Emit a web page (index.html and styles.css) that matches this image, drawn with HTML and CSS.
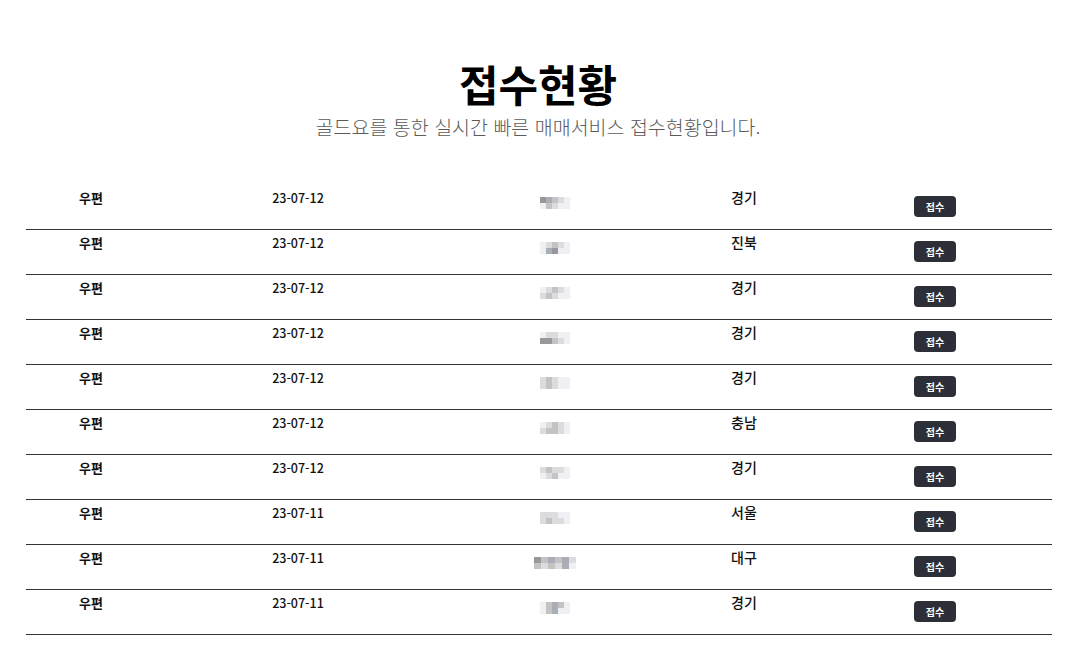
FILE: index.html
```html
<!DOCTYPE html>
<html lang="ko">
<head>
<meta charset="utf-8">
<title>접수현황</title>
<link rel="stylesheet" href="styles.css">
</head>
<body>
<header class="head">
  <h1 class="title">접수현황</h1>
  <p class="sub">골드요를 통한 실시간 빠른 매매서비스 접수현황입니다.</p>
</header>
<div class="list">
  <div class="row"><span class="c1">우편</span><span class="c2">23-07-12</span><span class="c3"><i class="mz"><b class="a"></b><b class="b"></b><b class="c"></b><b class="d"></b><b class="e"></b><b class="e"></b><b class="c"></b><b class="d"></b><b class="e"></b><b class="e"></b></i></span><span class="c4">경기</span><span class="c5"><em class="btn">접수</em></span></div>
  <div class="row"><span class="c1">우편</span><span class="c2">23-07-12</span><span class="c3"><i class="mz"><b class="e"></b><b class="d"></b><b class="c"></b><b class="d"></b><b class="e"></b><b class="e"></b><b class="b"></b><b class="a"></b><b class="e"></b><b class="e"></b></i></span><span class="c4">진북</span><span class="c5"><em class="btn">접수</em></span></div>
  <div class="row"><span class="c1">우편</span><span class="c2">23-07-12</span><span class="c3"><i class="mz"><b class="e"></b><b class="d"></b><b class="c"></b><b class="d"></b><b class="e"></b><b class="d"></b><b class="c"></b><b class="d"></b><b class="e"></b><b class="e"></b></i></span><span class="c4">경기</span><span class="c5"><em class="btn">접수</em></span></div>
  <div class="row"><span class="c1">우편</span><span class="c2">23-07-12</span><span class="c3"><i class="mz"><b class="e"></b><b class="d"></b><b class="d"></b><b class="e"></b><b class="e"></b><b class="a"></b><b class="a"></b><b class="c"></b><b class="d"></b><b class="e"></b></i></span><span class="c4">경기</span><span class="c5"><em class="btn">접수</em></span></div>
  <div class="row"><span class="c1">우편</span><span class="c2">23-07-12</span><span class="c3"><i class="mz"><b class="d"></b><b class="c"></b><b class="d"></b><b class="e"></b><b class="e"></b><b class="d"></b><b class="c"></b><b class="d"></b><b class="e"></b><b class="e"></b></i></span><span class="c4">경기</span><span class="c5"><em class="btn">접수</em></span></div>
  <div class="row"><span class="c1">우편</span><span class="c2">23-07-12</span><span class="c3"><i class="mz"><b class="e"></b><b class="d"></b><b class="c"></b><b class="d"></b><b class="e"></b><b class="d"></b><b class="c"></b><b class="c"></b><b class="d"></b><b class="e"></b></i></span><span class="c4">충남</span><span class="c5"><em class="btn">접수</em></span></div>
  <div class="row"><span class="c1">우편</span><span class="c2">23-07-12</span><span class="c3"><i class="mz"><b class="d"></b><b class="c"></b><b class="d"></b><b class="d"></b><b class="e"></b><b class="e"></b><b class="d"></b><b class="c"></b><b class="e"></b><b class="e"></b></i></span><span class="c4">경기</span><span class="c5"><em class="btn">접수</em></span></div>
  <div class="row"><span class="c1">우편</span><span class="c2">23-07-11</span><span class="c3"><i class="mz"><b class="d"></b><b class="d"></b><b class="d"></b><b class="e"></b><b class="e"></b><b class="d"></b><b class="c"></b><b class="d"></b><b class="d"></b><b class="e"></b></i></span><span class="c4">서울</span><span class="c5"><em class="btn">접수</em></span></div>
  <div class="row"><span class="c1">우편</span><span class="c2">23-07-11</span><span class="c3"><i class="mz wide"><b class="a"></b><b class="c"></b><b class="b"></b><b class="c"></b><b class="b"></b><b class="d"></b><b class="c"></b><b class="d"></b><b class="c"></b><b class="d"></b><b class="b"></b><b class="e"></b></i></span><span class="c4">대구</span><span class="c5"><em class="btn">접수</em></span></div>
  <div class="row"><span class="c1">우편</span><span class="c2">23-07-11</span><span class="c3"><i class="mz"><b class="e"></b><b class="c"></b><b class="b"></b><b class="c"></b><b class="e"></b><b class="e"></b><b class="c"></b><b class="b"></b><b class="e"></b><b class="e"></b></i></span><span class="c4">경기</span><span class="c5"><em class="btn">접수</em></span></div>
</div>
</body>
</html>
```
FILE: styles.css
```css
* { box-sizing: border-box; }
body {
  margin: 0;
  background: #fff;
  color: #111;
  font-family: "Noto Sans CJK KR", "Noto Sans", sans-serif;
}
.head {
  text-align: center;
  padding-top: 57px;
}
.title {
  margin: 0;
  font-size: 43px;
  line-height: 52px;
  font-weight: 700;
  color: #000;
}
.sub {
  margin: 6px 0 0;
  font-size: 19.5px;
  line-height: 24px;
  font-weight: 300;
  color: #5a5a5a;
}
.list {
  margin: 46px 24px 0 26px;
}
.row {
  display: grid;
  grid-template-columns: 130px 284px 230px 148px 234px;
  height: 45px;
  border-bottom: 1px solid #333;
  text-align: center;
}
.row > span {
  padding-top: 4px;
  font-size: 13px;
  line-height: 18px;
  font-weight: 700;
}
.row > .c2 {
  font-weight: 500;
  font-size: 12.5px;
}
.row > .c4 {
  font-size: 14px;
  font-weight: 500;
  line-height: 19px;
  padding-top: 3px;
}
.row > .c5 { padding-top: 11px; }
.btn {
  display: inline-block;
  width: 42px;
  height: 21px;
  border-radius: 4px;
  background: #2c2f37;
  color: #fff;
  font-style: normal;
  font-size: 10px;
  line-height: 21px;
  font-weight: 700;
}
.mz {
  display: inline-grid;
  grid-template-columns: repeat(5, 6px);
  grid-auto-rows: 6px;
  margin-top: 3px;
}
.mz.wide { grid-template-columns: repeat(6, 7px); }
.mz b { display: block; }
.mz .a { background: #9a979c; }
.mz .b { background: #a9adb5; }
.mz .c { background: #c4c2c3; }
.mz .d { background: #dcdcdf; }
.mz .e { background: #eef0f3; }
```
